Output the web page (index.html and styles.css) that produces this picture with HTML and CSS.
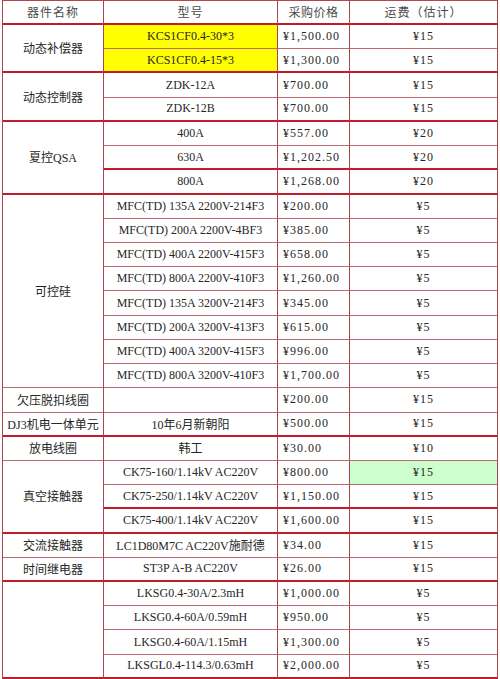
FILE: index.html
```html
<!DOCTYPE html>
<html lang="zh-CN">
<head>
<meta charset="utf-8">
<title>价格表</title>
<link rel="stylesheet" href="styles.css">
</head>
<body>
<div class="sheet">
  <div class="c n hd tb">器件名称</div>
  <div class="c m hd tb">型号</div>
  <div class="c p hd pc tb">采购价格</div>
  <div class="c f hd tb">运费（估计）</div>

  <div class="c n s2 tb">动态补偿器</div>
  <div class="c m yl">KCS1CF0.4-30*3</div>
  <div class="c p">¥1,500.00</div>
  <div class="c f">¥15</div>
  <div class="c m yl tb">KCS1CF0.4-15*3</div>
  <div class="c p tb">¥1,300.00</div>
  <div class="c f tb">¥15</div>

  <div class="c n s2 tb">动态控制器</div>
  <div class="c m">ZDK-12A</div>
  <div class="c p">¥700.00</div>
  <div class="c f">¥15</div>
  <div class="c m tb">ZDK-12B</div>
  <div class="c p tb">¥700.00</div>
  <div class="c f tb">¥15</div>

  <div class="c n s3 tb">夏控QSA</div>
  <div class="c m">400A</div>
  <div class="c p">¥557.00</div>
  <div class="c f">¥20</div>
  <div class="c m tb">630A</div>
  <div class="c p tb">¥1,202.50</div>
  <div class="c f tb">¥20</div>
  <div class="c m tb">800A</div>
  <div class="c p tb">¥1,268.00</div>
  <div class="c f tb">¥20</div>

  <div class="c n s8">可控硅</div>
  <div class="c m">MFC(TD) 135A 2200V-214F3</div>
  <div class="c p">¥200.00</div>
  <div class="c f">¥5</div>
  <div class="c m">MFC(TD) 200A 2200V-4BF3</div>
  <div class="c p">¥385.00</div>
  <div class="c f">¥5</div>
  <div class="c m">MFC(TD) 400A 2200V-415F3</div>
  <div class="c p">¥658.00</div>
  <div class="c f">¥5</div>
  <div class="c m">MFC(TD) 800A 2200V-410F3</div>
  <div class="c p">¥1,260.00</div>
  <div class="c f">¥5</div>
  <div class="c m">MFC(TD) 135A 3200V-214F3</div>
  <div class="c p">¥345.00</div>
  <div class="c f">¥5</div>
  <div class="c m">MFC(TD) 200A 3200V-413F3</div>
  <div class="c p">¥615.00</div>
  <div class="c f">¥5</div>
  <div class="c m">MFC(TD) 400A 3200V-415F3</div>
  <div class="c p">¥996.00</div>
  <div class="c f">¥5</div>
  <div class="c m">MFC(TD) 800A 3200V-410F3</div>
  <div class="c p">¥1,700.00</div>
  <div class="c f">¥5</div>

  <div class="c n">欠压脱扣线圈</div>
  <div class="c m"></div>
  <div class="c p">¥200.00</div>
  <div class="c f">¥15</div>

  <div class="c n tb">DJ3机电一体单元</div>
  <div class="c m tb">10年6月新朝阳</div>
  <div class="c p tb">¥500.00</div>
  <div class="c f tb">¥15</div>

  <div class="c n">放电线圈</div>
  <div class="c m">韩工</div>
  <div class="c p">¥30.00</div>
  <div class="c f">¥10</div>

  <div class="c n s3 tb">真空接触器</div>
  <div class="c m">CK75-160/1.14kV AC220V</div>
  <div class="c p">¥800.00</div>
  <div class="c f gr">¥15</div>
  <div class="c m tb">CK75-250/1.14kV AC220V</div>
  <div class="c p tb">¥1,150.00</div>
  <div class="c f tb">¥15</div>
  <div class="c m tb">CK75-400/1.14kV AC220V</div>
  <div class="c p tb">¥1,600.00</div>
  <div class="c f tb">¥15</div>

  <div class="c n">交流接触器</div>
  <div class="c m">LC1D80M7C AC220V施耐德</div>
  <div class="c p">¥34.00</div>
  <div class="c f">¥15</div>

  <div class="c n tb">时间继电器</div>
  <div class="c m tb">ST3P A-B AC220V</div>
  <div class="c p tb">¥26.00</div>
  <div class="c f tb">¥15</div>

  <div class="c n s4 tb"></div>
  <div class="c m">LKSG0.4-30A/2.3mH</div>
  <div class="c p">¥1,000.00</div>
  <div class="c f">¥5</div>
  <div class="c m">LKSG0.4-60A/0.59mH</div>
  <div class="c p">¥950.00</div>
  <div class="c f">¥5</div>
  <div class="c m">LKSG0.4-60A/1.15mH</div>
  <div class="c p">¥1,300.00</div>
  <div class="c f">¥5</div>
  <div class="c m tb">LKSGL0.4-114.3/0.63mH</div>
  <div class="c p tb">¥2,000.00</div>
  <div class="c f tb">¥5</div>
</div>
</body>
</html>
```

FILE: styles.css
```css
html, body {
  margin: 0;
  padding: 0;
  background: #ffffff;
}

.sheet {
  margin-left: 2px;
  width: 495px;
  display: grid;
  grid-template-columns: 101px 174px 72px 148px;
  grid-template-rows: 24px repeat(27, 24.222px);
  border-top: 1px solid #b5454d;
  border-left: 1px solid #a8454d;
  font-family: "Liberation Serif", "Noto Sans CJK SC", serif;
  font-size: 12px;
  color: #262626;
}

.c {
  box-sizing: border-box;
  border-right: 1px solid #a8454d;
  border-bottom: 1px solid #bf6a70;
  display: flex;
  align-items: center;
  justify-content: center;
  white-space: nowrap;
  overflow: hidden;
}

.c.tb {
  border-bottom: 2px solid #c21d2c;
}

.n { grid-column: 1; }
.m { grid-column: 2; }
.p {
  grid-column: 3;
  justify-content: flex-start;
  padding-left: 5px;
  letter-spacing: 1px;
}
.f {
  grid-column: 4;
  letter-spacing: 1px;
}

.p.pc {
  justify-content: center;
  padding-left: 0;
  letter-spacing: 0.5px;
}

.hd {
  color: #4a4a4a;
  letter-spacing: 1px;
}

.s2 { grid-row: span 2; }
.s3 { grid-row: span 3; }
.s4 { grid-row: span 4; }
.s8 { grid-row: span 8; }

.yl { background: #ffff00; }
.gr { background: #ccffcc; }
```
